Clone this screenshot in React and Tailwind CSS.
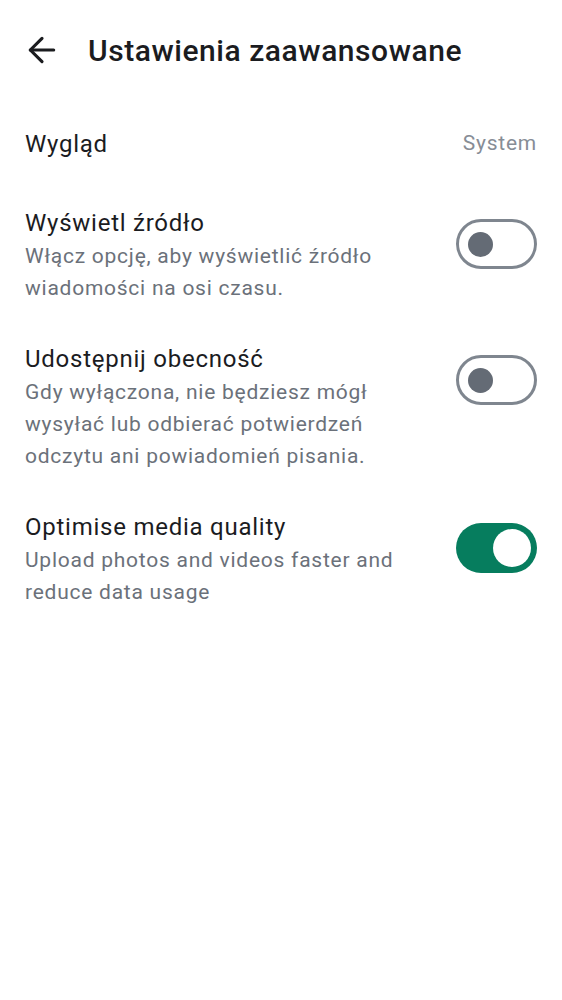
import { ArrowLeft } from "lucide-react";

function Toggle({ on }) {
    if (on) {
        return (
            <div className="w-[81px] h-[50px] rounded-full bg-[#067d5e] flex items-center justify-end pr-[6px] shrink-0 mt-[13px]">
                <div className="w-[38px] h-[38px] rounded-full bg-white"></div>
            </div>
        );
    }
    return (
        <div className="w-[81px] h-[50px] rounded-full border-[3px] border-[#7f868f] flex items-center pl-[9px] shrink-0 mt-[13px]">
            <div className="w-[25px] h-[25px] rounded-full bg-[#646b75]"></div>
        </div>
    );
}

function SwitchRow({ title, desc, on }) {
    return (
        <div className="flex items-start justify-between px-[25px] py-[19px]">
            <div className="flex flex-col pr-4">
                <div className="text-[24px] leading-[34px] tracking-[0.75px] text-[#1b1c1f]">{title}</div>
                <div className="text-[21px] leading-[32px] tracking-[0.75px] text-[#6b717a]">{desc}</div>
            </div>
            <Toggle on={on} />
        </div>
    );
}

export default function App() {
    return (
        <div className="w-[562px] h-[1000px] bg-white" style={{ fontFamily: "Roboto, 'Noto Sans', sans-serif" }}>
            <div className="flex items-center h-[100px] pl-[22px]">
                <ArrowLeft size={40} strokeWidth={1.9} className="text-[#1b1c1f]" />
                <h1 className="ml-[26px] text-[30px] tracking-[0.55px] font-medium text-[#1b1c1f]">Ustawienia zaawansowane</h1>
            </div>
            <div className="flex items-center justify-between px-[25px] h-[87px]">
                <div className="text-[24px] tracking-[0.75px] text-[#1b1c1f]">Wygląd</div>
                <div className="text-[21px] tracking-[0.75px] text-[#878d96]">System</div>
            </div>
            <SwitchRow
                title="Wyświetl źródło"
                desc={<>Włącz opcję, aby wyświetlić źródło<br />wiadomości na osi czasu.</>}
            />
            <SwitchRow
                title="Udostępnij obecność"
                desc={<>Gdy wyłączona, nie będziesz mógł<br />wysyłać lub odbierać potwierdzeń<br />odczytu ani powiadomień pisania.</>}
            />
            <SwitchRow
                title="Optimise media quality"
                desc={<>Upload photos and videos faster and<br />reduce data usage</>}
                on
            />
        </div>
    );
}
